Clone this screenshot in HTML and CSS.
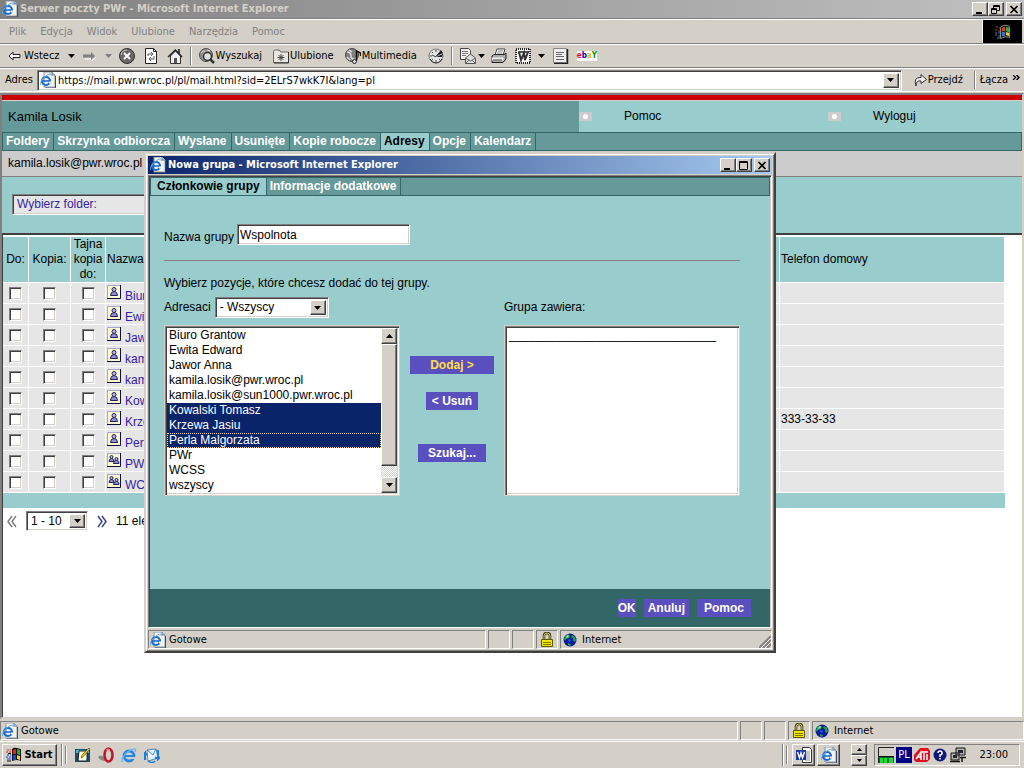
FILE: index.html
```html
<!DOCTYPE html>
<html lang="pl">
<head>
<meta charset="utf-8">
<title>Serwer poczty PWr</title>
<link rel="stylesheet" href="styles.css">
</head>
<body>
<svg class="sprites" aria-hidden="true">
  <symbol id="ie-page" viewBox="0 0 16 16">
    <path d="M4 0h8l3 3v12H4z" fill="#f4f4ec" stroke="#8c96a8"/><path d="M12 0v3h3" fill="#c8d0dc" stroke="#6878a0"/>
    <path d="M15.500 4v12H5" fill="none" stroke="#404878"/>
    <circle cx="6" cy="9" r="4" fill="none" stroke="#1c6cd0" stroke-width="2.200"/><path d="M3 9h7" stroke="#1c6cd0" stroke-width="1.600"/><path d="M9 10.500h3" stroke="#f4f4ec" stroke-width="2"/>
    <path d="M1 13c-2-1 1-6 5-9s6-2 5 0" fill="none" stroke="#58b0f0"/>
  </symbol>
  <symbol id="ie" viewBox="0 0 16 16">
    <circle cx="8" cy="9" r="5" fill="none" stroke="#2888e0" stroke-width="2.800"/><path d="M4 9h9" stroke="#2888e0" stroke-width="2"/><path d="M10 11h5" stroke="#d4d0c8" stroke-width="2"/>
    <path d="M2 15c-3-1 1-8 6-11s8-3 6 1" fill="none" stroke="#60b8f8" stroke-width="1.300"/>
  </symbol>
  <symbol id="flag" viewBox="0 0 16 16">
    <path d="M6 2q2-2 5-1t4 1v12q-2-1-4-1t-5 1z" fill="#111"/>
    <path d="M7 3q2-1 3-1v5H7z" fill="#e02810"/><path d="M11 2l3 1v5l-3-1z" fill="#20b030"/><path d="M7 8h3v5l-3 0z" fill="#1848e0"/><path d="M11 8l3 1v4l-3-1z" fill="#f8d010"/>
    <path d="M1 3h2M4 3h1M0 5h2M3 5h2" stroke="#e02810"/><path d="M1 8h2M4 8h1M0 10h2M3 10h2M1 12h4" stroke="#1848e0"/><path d="M2 6.500h3M1 14h4" stroke="#111"/>
  </symbol>
  <symbol id="lock" viewBox="0 0 14 16">
    <path d="M4 8V4q0-3 3-3t3 3v4" fill="none" stroke="#403c00" stroke-width="2.600"/><path d="M4 8V4q0-3 3-3t3 3v4" fill="none" stroke="#c8c080"/>
    <path d="M1.500 7.500h11v7h-11z" fill="#f0e800" stroke="#605800"/><path d="M3 10.500h8M3 12.500h8" stroke="#807800"/>
  </symbol>
  <symbol id="globe" viewBox="0 0 14 14">
    <circle cx="7" cy="7" r="6.500" fill="#0818a0"/><path d="M2 3l3-2 2 2-1 2-3 1-1 2-1-2zM9 2l3 2 1 4-2 1-1-2v-2l-2-1zM5 10l3 1-1 2-2-1z" fill="#18a838"/><path d="M3 4l2-2 1 1-2 2z" fill="#a8e8c8"/><path d="M6 6l2 1-1 2-2-1z" fill="#2858f0"/>
  </symbol>
  <symbol id="person" viewBox="0 0 14 14">
    <path d="M.5.5h13v13H.5z" fill="#fffbd0" stroke="#a8a8c8"/><path d="M13.500 0v13.500H0" fill="none" stroke="#101040"/>
    <circle cx="7" cy="4.500" r="2" fill="#b8b8e8" stroke="#202060"/><path d="M3.500 10.500q0-4 3.500-4t3.500 4z" fill="#9090d8" stroke="#202060"/>
  </symbol>
  <symbol id="people" viewBox="0 0 14 14">
    <path d="M.5.5h13v13H.5z" fill="#fffbd0" stroke="#a8a8c8"/><path d="M13.500 0v13.500H0" fill="none" stroke="#101040"/>
    <circle cx="4.500" cy="4" r="1.500" fill="#b8b8e8" stroke="#202060"/><path d="M2 8.500q0-3 2.500-3t2.500 3z" fill="#9090d8" stroke="#202060"/>
    <circle cx="9.500" cy="6" r="1.500" fill="#b8b8e8" stroke="#202060"/><path d="M6.500 10.500q0-3 3-3t2.500 3z" fill="#9090d8" stroke="#202060"/>
  </symbol>
  <symbol id="down" viewBox="0 0 7 4"><path d="M0 0h7L3.500 4z" fill="currentColor"/></symbol>
  <symbol id="up" viewBox="0 0 7 4"><path d="M0 4h7L3.500 0z" fill="currentColor"/></symbol>
  <symbol id="min" viewBox="0 0 10 9"><path d="M1 8h6" stroke="#000" stroke-width="2"/></symbol>
  <symbol id="max" viewBox="0 0 10 9"><path d="M.5.5h8v8h-8zM0 1.500h9" fill="none" stroke="#000"/></symbol>
  <symbol id="restore" viewBox="0 0 10 9"><path d="M2.500 3V.5h6v5H6M2 1.500h7M.5 3.500h5v5h-5zM0 4.500h6" fill="none" stroke="#000"/></symbol>
  <symbol id="close" viewBox="0 0 10 9"><path d="M1.500 1l7 7M8.500 1l-7 7" stroke="#000" stroke-width="1.700"/></symbol>
</svg>

<div class="desktop">
  <header class="titlebar titlebar-idle">
    <svg class="i16"><use href="#ie-page"/></svg>
    <h1 class="window-title">Serwer poczty PWr - Microsoft Internet Explorer</h1>
    <div class="window-buttons">
      <button class="wbtn" aria-label="Minimalizuj"><svg><use href="#min"/></svg></button>
      <button class="wbtn" aria-label="Przywróć"><svg><use href="#restore"/></svg></button>
      <button class="wbtn wbtn-close" aria-label="Zamknij"><svg><use href="#close"/></svg></button>
    </div>
  </header>

  <nav class="bar menubar">
    <button class="menu">Plik</button><button class="menu">Edycja</button><button class="menu">Widok</button><button class="menu">Ulubione</button><button class="menu">Narzędzia</button><button class="menu">Pomoc</button>
    <span class="throbber"><svg class="i16" viewBox="0 0 16 16"><path d="M5.500 3.500q4-4 9-1v11q-4-2-9 1z" fill="#222" stroke="#8a8a80"/><path d="M7 4q2-1 3-1v4H7z" fill="#e04020"/><path d="M11 3l3 1v4l-3-1z" fill="#30b040"/><path d="M7 8h3v4H7z" fill="#3070d8"/><path d="M11 8l3 1v3l-3-1z" fill="#f8d020"/><path d="M1 3h2M4 4h1M0 6h2M3 7h2" stroke="#b05040"/><path d="M0 9h2M3 9h2M0 11h2M3 12h2M2 14h3" stroke="#5878b0"/></svg></span>
  </nav>

  <div class="bar toolbar">
    <button class="tool"><svg class="arrow" viewBox="0 0 13 10"><path d="M1 5l4-4v2.500h7v3H5V9z" fill="#fff" stroke="#222"/></svg><span>Wstecz</span></button>
    <svg class="tri tri-back"><use href="#down"/></svg>
    <button class="tool tool-off" aria-label="Dalej"><svg class="arrow" viewBox="0 0 13 10"><path d="M13 6L9 10V8H2" fill="none" stroke="#fff"/><path d="M12 5L8 1v2.500H0v3h8V9z" fill="#808080"/></svg></button>
    <svg class="tri tri-off"><use href="#down"/></svg>
    <button class="tool" aria-label="Zatrzymaj"><svg class="i16" viewBox="0 0 16 16"><circle cx="8" cy="8" r="7.500" fill="#686868" stroke="#303030"/><path d="M2 7q1-5 6-5" fill="none" stroke="#c8c8c8"/><path d="M5 5l6 6M11 5l-6 6" stroke="#fff" stroke-width="1.800"/></svg></button>
    <button class="tool" aria-label="Odśwież"><svg class="i16" viewBox="0 0 16 16"><path d="M2.500.5h8l3 3v12h-11z" fill="#fff" stroke="#222"/><path d="M10.500.5v3h3" fill="none" stroke="#222"/><path d="M5 8V6h5M8 4l2 2-2 2M11 8v3H6M8 9l-2 2 2 2" fill="none" stroke="#555"/></svg></button>
    <button class="tool tool-home" aria-label="Strona główna"><svg class="i16" viewBox="0 0 16 16"><path d="M11 1h2v5h-2z" fill="#444"/><path d="M3.500 8v7.500h10V8L8.500 3z" fill="#eee" stroke="#333"/><path d="M1 9l7.500-7L15 9" fill="none" stroke="#222" stroke-width="1.500"/><path d="M7 10h3v5H7z" fill="#555"/></svg></button>
    <span class="sep"></span>
    <button class="tool"><svg class="i16" viewBox="0 0 16 16"><circle cx="7" cy="7" r="6.500" fill="#909090" stroke="#505050"/><path d="M2 5q3-4 5 0t-3 4M8 2l3 1" fill="none" stroke="#ddd"/><circle cx="8.500" cy="8.500" r="4" fill="#e0e0e0" stroke="#333" stroke-width="1.500"/><path d="M11 11l4 4" stroke="#333" stroke-width="2.500"/></svg><span>Wyszukaj</span></button>
    <button class="tool tool-gap"><svg class="i16" viewBox="0 0 16 16"><path d="M.5 14.500v-11l1-1.500h5l1 2h8v10.500z" fill="#e8e8e0" stroke="#666"/><path d="M15.500 4v11H1" fill="none" stroke="#333"/><path d="M8 6v7M4.500 9.500h7M5.500 7l5 5M10.500 7l-5 5" stroke="#444"/></svg><span>Ulubione</span></button>
    <button class="tool tool-gap"><svg class="i16" viewBox="0 0 16 16"><circle cx="7" cy="7" r="6.500" fill="#808080" stroke="#484848"/><path d="M2 4q4 0 4 4t5 3M4 2l3 2M2 9l3 3" fill="none" stroke="#ddd" stroke-width="1.500"/><path d="M11.500 13V3l4 2v3" fill="none" stroke="#111" stroke-width="1.400"/><circle cx="9.500" cy="13.500" r="2" fill="#e0e0e0" stroke="#222"/></svg><span>Multimedia</span></button>
    <button class="tool tool-gap" aria-label="Historia"><svg class="i16" viewBox="0 0 16 16"><circle cx="8" cy="8" r="7" fill="#e4e4e4" stroke="#777"/><path d="M14 11q-2 4-6 4t-6-4" fill="none" stroke="#333"/><path d="M7 9l6-7 2 3zM8 9l7-3-1 3z" fill="#222"/><path d="M8 2v2M2 8h2M8 12v2M4 4l1 1M4 12l1-1M11 11l1 1M4 7l4 2" stroke="#444"/></svg></button>
    <span class="sep"></span>
    <button class="tool" aria-label="Poczta"><svg class="i16" viewBox="0 0 16 16"><path d="M.5.5h8l2 2v9H.5z" fill="#f4f4f4" stroke="#444"/><path d="M2 3.500h6M2 5.500h6M2 7.500h4" stroke="#777"/><path d="M5.500 10l5-4 5 4v5.500h-10z" fill="#ddd" stroke="#555"/><path d="M5.500 10l5 3 5-3M6 15l3-3M15 15l-3-3" fill="none" stroke="#666"/></svg></button>
    <svg class="tri tri-mail"><use href="#down"/></svg>
    <button class="tool" aria-label="Drukuj"><svg class="i16" viewBox="0 0 16 16"><path d="M4 7l2-6h8l-2 6z" fill="#fff" stroke="#444"/><path d="M7 3h5M6 5h5" stroke="#888"/><path d="M1 8l2-1.500h10L15 5v6l-3 3.500H1z" fill="#aaa" stroke="#222"/><path d="M1 9.500h11.500v3H1z" fill="#eee"/><path d="M2 12h9" stroke="#444"/></svg></button>
    <button class="tool tool-word" aria-label="Edytuj"><svg class="i16" viewBox="0 0 16 16"><path d="M1 1h14v14H1z" fill="#fff" stroke="#222" stroke-width="2" stroke-dasharray="1 1"/><path d="M3 4h4M6 4h4M10 4h4" stroke="#222" stroke-width="1.500"/><path d="M4 4l2 8 3-7 1 7 3-8" fill="none" stroke="#333" stroke-width="2"/></svg></button>
    <svg class="tri tri-word"><use href="#down"/></svg>
    <button class="tool tool-note" aria-label="Dyskusja"><svg class="i16" viewBox="0 0 16 16"><path d="M.5.5h13v14H.5z" fill="#eee" stroke="#888"/><path d="M14.500 1v14.500H1" fill="none" stroke="#222" stroke-width="1.500"/><path d="M3 4.500h8M3 6.500h6M3 8.500h8M3 11.500h8" stroke="#666"/></svg></button>
    <button class="ebay" aria-label="eBay"><span class="e">e</span><span class="b">b</span><span class="a">a</span><span class="y">Y</span></button>
  </div>

  <div class="bar addressbar">
    <label for="url">Adres</label>
    <div class="combo combo-url sunken">
      <svg class="i16"><use href="#ie-page"/></svg>
      <input id="url" class="url" value="https://mail.pwr.wroc.pl/pl/mail.html?sid=2ELrS7wkK7I&amp;lang=pl">
      <button class="dropper raised" aria-label="Rozwiń"><svg class="tri"><use href="#down"/></svg></button>
    </div>
    <button class="tool go"><svg class="go-icon" viewBox="0 0 13 13"><path d="M2 12Q-1 3 7 3.500V.5l5.500 5L7 9.500V7Q2 6 2 12z" fill="#eee" stroke="#333"/></svg><span>Przejdź</span></button>
    <span class="sep"></span>
    <button class="tool links">Łącza</button>
    <svg class="chev" viewBox="0 0 8 5"><path d="M1 0l2.500 2.500L1 5M4.500 0L7 2.500 4.500 5" fill="none" stroke="#000" stroke-width="1.400"/></svg>
  </div>

  <main class="viewport">
    <div class="redline"></div>
    <div class="userbar">
      <div class="user">Kamila Losik</div>
      <a class="toplink" href="#pomoc"><span class="bullet"></span>Pomoc</a>
      <a class="toplink" href="#wyloguj"><span class="bullet"></span>Wyloguj</a>
    </div>
    <nav class="tabs">
      <a class="tab" href="#f">Foldery</a><a class="tab" href="#s">Skrzynka odbiorcza</a><a class="tab" href="#w">Wysłane</a><a class="tab" href="#u">Usunięte</a><a class="tab" href="#k">Kopie robocze</a><a class="tab tab-on" href="#a">Adresy</a><a class="tab" href="#o">Opcje</a><a class="tab" href="#kal">Kalendarz</a>
    </nav>
    <div class="account">kamila.losik@pwr.wroc.pl</div>
    <div class="folderbar">
      <div class="combo folder sunken"><select aria-label="Folder"><option>Wybierz folder:</option></select><span class="dropper raised"><svg class="tri"><use href="#down"/></svg></span></div>
    </div>
    <div class="listing">
      <table class="contacts">
        <colgroup><col class="c-to"><col class="c-cc"><col class="c-bcc"><col class="c-name"><col class="c-tel"></colgroup>
        <thead><tr><th>Do:</th><th>Kopia:</th><th>Tajna kopia do:</th><th class="left">Nazwa</th><th class="left">Telefon domowy</th></tr></thead>
        <tbody>
          <tr><td><input type="checkbox" aria-label="Do"></td><td><input type="checkbox" aria-label="Kopia"></td><td><input type="checkbox" aria-label="Tajna kopia"></td><td><a class="name" href="#1"><svg class="i14"><use href="#person"/></svg>Biuro Grantow</a></td><td></td></tr>
          <tr><td><input type="checkbox" aria-label="Do"></td><td><input type="checkbox" aria-label="Kopia"></td><td><input type="checkbox" aria-label="Tajna kopia"></td><td><a class="name" href="#2"><svg class="i14"><use href="#person"/></svg>Ewita Edward</a></td><td></td></tr>
          <tr><td><input type="checkbox" aria-label="Do"></td><td><input type="checkbox" aria-label="Kopia"></td><td><input type="checkbox" aria-label="Tajna kopia"></td><td><a class="name" href="#3"><svg class="i14"><use href="#person"/></svg>Jawor Anna</a></td><td></td></tr>
          <tr><td><input type="checkbox" aria-label="Do"></td><td><input type="checkbox" aria-label="Kopia"></td><td><input type="checkbox" aria-label="Tajna kopia"></td><td><a class="name" href="#4"><svg class="i14"><use href="#person"/></svg>kamila.losik@pwr.wroc.pl</a></td><td></td></tr>
          <tr><td><input type="checkbox" aria-label="Do"></td><td><input type="checkbox" aria-label="Kopia"></td><td><input type="checkbox" aria-label="Tajna kopia"></td><td><a class="name" href="#5"><svg class="i14"><use href="#person"/></svg>kamila.losik@sun1000.pwr.wroc.pl</a></td><td></td></tr>
          <tr><td><input type="checkbox" aria-label="Do"></td><td><input type="checkbox" aria-label="Kopia"></td><td><input type="checkbox" aria-label="Tajna kopia"></td><td><a class="name" href="#6"><svg class="i14"><use href="#person"/></svg>Kowalski Tomasz</a></td><td></td></tr>
          <tr><td><input type="checkbox" aria-label="Do"></td><td><input type="checkbox" aria-label="Kopia"></td><td><input type="checkbox" aria-label="Tajna kopia"></td><td><a class="name" href="#7"><svg class="i14"><use href="#person"/></svg>Krzewa Jasiu</a></td><td class="left">333-33-33</td></tr>
          <tr><td><input type="checkbox" aria-label="Do"></td><td><input type="checkbox" aria-label="Kopia"></td><td><input type="checkbox" aria-label="Tajna kopia"></td><td><a class="name" href="#8"><svg class="i14"><use href="#person"/></svg>Perla Malgorzata</a></td><td></td></tr>
          <tr><td><input type="checkbox" aria-label="Do"></td><td><input type="checkbox" aria-label="Kopia"></td><td><input type="checkbox" aria-label="Tajna kopia"></td><td><a class="name" href="#9"><svg class="i14"><use href="#people"/></svg>PWr</a></td><td></td></tr>
          <tr><td><input type="checkbox" aria-label="Do"></td><td><input type="checkbox" aria-label="Kopia"></td><td><input type="checkbox" aria-label="Tajna kopia"></td><td><a class="name" href="#10"><svg class="i14"><use href="#people"/></svg>WCSS</a></td><td></td></tr>
        </tbody>
      </table>
      <div class="table-end"></div>
      <div class="pager">
        <svg class="page-arrow" viewBox="0 0 10 13"><path d="M5 1L1 6.500 5 12M9 1L5 6.500 9 12" fill="none" stroke="#808080" stroke-width="1.500"/></svg>
        <div class="combo pages sunken"><select aria-label="Strona"><option>1 - 10</option></select><span class="dropper raised"><svg class="tri"><use href="#down"/></svg></span></div>
        <svg class="page-arrow" viewBox="0 0 10 13"><path d="M1 1l4 5.500L1 12M5 1l4 5.500L5 12" fill="none" stroke="#404090" stroke-width="1.500"/></svg>
        <span class="count">11 elementów</span>
      </div>
    </div>
  </main>

  <footer class="statusbar">
    <div class="panel panel-main"><svg class="i16"><use href="#ie-page"/></svg>Gotowe</div>
    <div class="panel"></div><div class="panel"></div>
    <div class="panel panel-lock"><svg class="lock"><use href="#lock"/></svg></div>
    <div class="panel panel-zone"><svg class="i14"><use href="#globe"/></svg>Internet</div>
  </footer>

  <div class="taskbar">
    <button class="start raised"><svg class="i16"><use href="#flag"/></svg>Start</button>
    <span class="sep sep-task"></span><span class="sep sep-grip"></span>
    <div class="quick">
      <svg class="i16" viewBox="0 0 16 16"><path d="M0 2h15v13H0z" fill="#105070"/><path d="M1 3h13v3H1z" fill="#50b0d8"/><path d="M4 4h8v10H3z" fill="#fffce0" stroke="#222"/><path d="M6 11l1-3 7-7 1 1-7 8z" fill="#f0c020" stroke="#604000" stroke-width=".6"/></svg>
      <svg class="i16" viewBox="0 0 16 16"><path d="M0 10q2-3 6 0l2 4q-6 0-8-4z" fill="#888"/><ellipse cx="10.500" cy="8" rx="4" ry="6.500" fill="none" stroke="#c01828" stroke-width="2.600"/><path d="M8 3q2-2 4 0" fill="none" stroke="#f09090"/></svg>
      <svg class="i16"><use href="#ie"/></svg>
      <svg class="i16" viewBox="0 0 16 16"><path d="M3 3l9-1 2 9-10 3z" fill="#e8f4ff" stroke="#4888c8"/><path d="M3 3l6 5 3-6" fill="none" stroke="#4888c8"/><path d="M1 13V6l-1 1M1 6l2 2M14 3v9l2-2M14 12l-3-2" fill="none" stroke="#2078d8" stroke-width="2"/><path d="M4 14q4 3 7 0" fill="none" stroke="#2078d8" stroke-width="1.500"/></svg>
    </div>
    <div class="task-right">
      <span class="sep sep-task"></span><span class="sep sep-grip"></span>
      <button class="task raised" aria-label="Word"><svg class="i16" viewBox="0 0 16 16"><path d="M6.500.5h7l2 2v13h-9z" fill="#fff" stroke="#333"/><path d="M9 5h5M9 7h5M9 9h5M9 11h5M9 13h5" stroke="#888"/><path d="M0 3h10v10H0z" fill="#1838a0"/><path d="M1.500 5l2 6 1.500-5 1.500 5 2-6" fill="none" stroke="#fff" stroke-width="1.400"/></svg></button>
      <button class="task raised" aria-label="Internet Explorer"><svg class="i16"><use href="#ie-page"/></svg></button>
      <div class="spinner"><button class="raised" aria-label="W górę"><svg><use href="#up"/></svg></button><button class="raised" aria-label="W dół"><svg><use href="#down"/></svg></button></div>
      <div class="tray">
        <svg class="i16" viewBox="0 0 16 16"><path d="M0 0h16v16H0z" fill="#d4d0c8"/><path d="M.5 16V.5H16" fill="none" stroke="#222"/><path d="M1 9.500h15" stroke="#111"/><path d="M1 10h15v6H1z" fill="#063"/><path d="M2 11h3v5H2zM6 11h3v5H6zM11 11h4v5h-4z" fill="#18e030"/></svg>
        <span class="lang">PL</span>
        <svg class="i16" viewBox="0 0 16 16"><path d="M0 13V8l6-7h8l2 3v8l-3 3H2z" fill="#e01020"/><path d="M2 12l5-7v8M4 10h3M8 5h6M10 6v7M13 7v6" fill="none" stroke="#fff" stroke-width="1.500"/></svg>
        <svg class="i16" viewBox="0 0 16 16"><circle cx="8" cy="8" r="6.500" fill="#101878"/><path d="M6 6q0-2 2-2t2 2-2 2v2M8 11v1.500" fill="none" stroke="#fff" stroke-width="1.500"/></svg>
        <svg class="i16" viewBox="0 0 16 16"><path d="M6 1h9v7H6zM1 6h8v7H1z" fill="#b8b4ac" stroke="#111"/><path d="M8 3h5v3H8zM3 8h4v3H3z" fill="#223"/><path d="M0 14.500h10M10 10.500h6M12 10v5" stroke="#111" stroke-width="1.500"/></svg>
        <time class="clock">23:00</time>
      </div>
    </div>
  </div>

  <section class="dialog" aria-labelledby="dialog-title">
    <header class="titlebar">
      <svg class="i16"><use href="#ie-page"/></svg>
      <h2 class="window-title" id="dialog-title">Nowa grupa - Microsoft Internet Explorer</h2>
      <div class="window-buttons">
        <button class="wbtn" aria-label="Minimalizuj"><svg><use href="#min"/></svg></button>
        <button class="wbtn" aria-label="Maksymalizuj"><svg><use href="#max"/></svg></button>
        <button class="wbtn wbtn-close" aria-label="Zamknij"><svg><use href="#close"/></svg></button>
      </div>
    </header>
    <div class="dialog-view">
      <nav class="tabs dialog-tabs"><a class="tab tab-on" href="#czl">Członkowie grupy</a><a class="tab" href="#inf">Informacje dodatkowe</a></nav>
      <form class="group-form">
        <div class="name-row"><label for="group">Nazwa grupy</label><input id="group" class="group-name sunken" value="Wspolnota"></div>
        <hr class="rule">
        <p class="hint">Wybierz pozycje, które chcesz dodać do tej grupy.</p>
        <div class="lists">
          <div class="source"><label for="src">Adresaci</label><div class="combo source-combo sunken"><select id="src"><option>- Wszyscy</option></select><span class="dropper raised"><svg class="tri"><use href="#down"/></svg></span></div></div>
          <label class="contains" for="members">Grupa zawiera:</label>
          <div class="listbox list-left">
            <select multiple size="11" aria-label="Adresaci">
              <option>Biuro Grantow</option><option>Ewita Edward</option><option>Jawor Anna</option><option>kamila.losik@pwr.wroc.pl</option><option>kamila.losik@sun1000.pwr.wroc.pl</option><option selected>Kowalski Tomasz</option><option selected>Krzewa Jasiu</option><option selected class="focus">Perla Malgorzata</option><option>PWr</option><option>WCSS</option><option>wszyscy</option>
            </select>
            <div class="scroll"><span class="scroll-btn raised"><svg class="tri"><use href="#up"/></svg></span><span class="thumb raised"></span><span class="scroll-btn raised"><svg class="tri"><use href="#down"/></svg></span></div>
          </div>
          <div class="moves">
            <button type="button" class="btn btn-add">Dodaj &gt;</button>
            <button type="button" class="btn btn-remove">&lt; Usuń</button>
            <button type="button" class="btn btn-find">Szukaj...</button>
          </div>
          <div class="listbox"><select id="members" multiple size="11"><option>_______________________________</option></select></div>
        </div>
      </form>
      <div class="actions"><button class="btn btn-ok">OK</button><button class="btn btn-cancel">Anuluj</button><button class="btn btn-help">Pomoc</button></div>
    </div>
    <footer class="statusbar">
      <div class="panel panel-main"><svg class="i16"><use href="#ie-page"/></svg>Gotowe</div>
      <div class="panel"></div><div class="panel"></div>
      <div class="panel panel-lock"><svg class="lock"><use href="#lock"/></svg></div>
      <div class="panel panel-zone"><svg class="i14"><use href="#globe"/></svg>Internet<svg class="grip" viewBox="0 0 12 12"><path d="M0 12L12 0M4 12l8-8M8 12l4-4" stroke="#808080" stroke-width="2"/><path d="M2 12L12 2M6 12l6-6" stroke="#fff"/></svg></div>
    </footer>
  </section>
</div>
</body>
</html>
```
FILE: styles.css
```css
* { box-sizing: border-box; }
:root {
  --face: #d4d0c8;
  --shade: #808080;
  --dark: #404040;
  --teal: #99cccc;
  --teal-mid: #669999;
  --teal-dark: #336666;
  --link: #3322aa;
  --ui: "DejaVu Sans Condensed", "DejaVu Sans", sans-serif;
  --page: "Liberation Sans", Arial, sans-serif;
}
body { margin: 0; font: 11px/14px var(--ui); color: #000; background: var(--face); }
button { margin: 0; padding: 0; border: 0; background: none; font: inherit; color: inherit; }
a { color: inherit; text-decoration: none; }
.sprites { position: absolute; width: 0; height: 0; }
.i16 { width: 16px; height: 16px; flex: none; }
.i14 { width: 14px; height: 14px; flex: none; }
.tri { width: 7px; height: 4px; flex: none; }
.raised {
  background: var(--face);
  border: 1px solid;
  border-color: #fff var(--dark) var(--dark) #fff;
  box-shadow: inset -1px -1px var(--shade);
}
.sunken {
  border: 1px solid;
  border-color: var(--shade) #fff #fff var(--shade);
  box-shadow: inset 1px 1px var(--dark), inset -1px -1px var(--face);
}
.sep { width: 2px; height: 18px; flex: none; border-left: 1px solid var(--shade); border-right: 1px solid #fff; }

.desktop { position: relative; display: flex; flex-direction: column; height: 100vh; overflow: hidden; background: var(--face); }

.titlebar { display: flex; align-items: center; flex: none; gap: 2px; height: 18px; padding-left: 2px; color: #fff; background: linear-gradient(90deg, #0a246a, #a6caf0); }
.titlebar-idle { color: var(--face); background: linear-gradient(90deg, #808080, #c0c0c0); }
.window-title { margin: 0; font: bold 11px/16px var(--ui); white-space: nowrap; }
.window-buttons { display: flex; margin-left: auto; padding-right: 2px; }
.wbtn { display: grid; place-items: center; width: 16px; height: 14px; background: var(--face); border: 1px solid; border-color: #fff var(--dark) var(--dark) #fff; box-shadow: inset -1px -1px var(--shade); }
.wbtn svg { width: 10px; height: 9px; }
.wbtn-close { margin-left: 2px; }

.bar { display: flex; align-items: center; flex: none; height: 24px; border-top: 1px solid #fff; border-bottom: 1px solid var(--shade); }
.menubar { margin-top: 1px; box-shadow: 0 -1px var(--shade); padding-left: 9px; gap: 14px; color: var(--shade); height: 25px; }
.throbber { display: grid; place-items: center; align-self: stretch; width: 40px; margin: 0 2px 0 auto; background: #000; border-left: 1px solid #fff; }
.toolbar { padding-left: 8px; }
.tool { display: flex; align-items: center; gap: 1px; }
.arrow { width: 13px; height: 10px; margin-right: 2px; }
.tri-back { margin: 0 8px; }
.tri-off { margin: 0 7px; color: var(--shade); }
.toolbar .tool + .tool { margin-left: 8px; }
.toolbar .tool + .tool-gap { margin-left: 11px; }
.toolbar .sep { margin: 0 7px; }
.tri-mail { margin: 0 6px 0 2px; }
.tri-word { margin: 0 8px 0 7px; }
.ebay { margin-left: 8px; font: bold 8px/10px var(--ui); background: #fff; }
.e { color: #e00; } .b { color: #00c; } .a { color: #e8b800; } .y { color: #090; }

.addressbar { padding: 0 2px 0 5px; gap: 4px; border-bottom-color: #fff; }
.combo { display: flex; align-items: center; background: #fff; padding: 2px; }
.combo select, .url { flex: 1; min-width: 0; height: 16px; margin: 0; padding: 0 2px; border: 0; outline: 0; background: none; appearance: none; color: inherit; font: inherit; }
.combo-url { flex: 1; height: 21px; }
.dropper { display: grid; place-items: center; flex: none; width: 16px; align-self: stretch; }
.go { width: 64px; padding-left: 8px; }
.go-icon { width: 13px; height: 13px; }
.chev { width: 8px; height: 5px; margin: 0 2px 6px 0; }

.viewport { flex: 1; min-height: 0; display: flex; flex-direction: column; margin-top: 1px; border: 2px solid; border-color: var(--shade) var(--face) var(--face) var(--shade); box-shadow: inset 1px 1px var(--dark); background: #fff; font: 12px/15px var(--page); }
.redline { flex: none; height: 6px; background: #c00; border-bottom: 1px solid var(--face); }
.userbar { display: grid; grid-template-columns: 577fr 249fr 194fr; flex: none; height: 31px; background: var(--teal); }
.user { display: flex; align-items: center; padding-left: 6px; background: var(--teal-mid); font-size: 13px; }
.toplink { display: flex; align-items: center; gap: 32px; font-size: 12px; }
.bullet { display: grid; place-items: center; width: 13px; height: 9px; background: #ccc; }
.bullet::before { content: ""; width: 5px; height: 5px; border-radius: 50%; background: #fff; }
.tabs { display: flex; flex: none; height: 19px; border: 1px solid var(--teal-dark); background: var(--teal-mid); color: #fff; font: bold 12px/17px var(--page); }
.tab { padding: 0 4px 0 3px; border-right: 1px solid var(--teal-dark); white-space: nowrap; }
.tab-on { color: #000; background: var(--teal); }
.account { flex: none; height: 26px; padding: 5px 6px 0; background: #ccc; border-bottom: 1px solid var(--shade); }
.folderbar { flex: none; height: 58px; padding: 17px 10px 0; background: var(--teal); border-bottom: 2px solid var(--dark); }
.folder { width: 220px; height: 21px; background: #e6e6e6; color: var(--link); }
.listing { flex: 1; padding: 1px 17px 0 0; }
.contacts { width: 100%; table-layout: fixed; border-spacing: 1px; }
.c-to { width: 25px; } .c-cc { width: 41px; } .c-bcc { width: 34px; } .c-name { width: 673px; }
.contacts th { height: 45px; padding: 0; font-weight: normal; background: var(--teal); }
.contacts td { height: 20px; padding: 0; text-align: center; background: #e6e6e6; line-height: 13px; }
.contacts .left { text-align: left; padding-left: 1px; }
.contacts input { appearance: none; display: block; width: 13px; height: 13px; margin: 0 auto; background: #fff; border: 1px solid; border-color: var(--shade) #fff #fff var(--shade); box-shadow: inset 1px 1px var(--dark), inset -1px -1px var(--face); }
.name { display: flex; align-items: flex-end; gap: 4px; height: 20px; padding-left: 1px; color: var(--link); white-space: nowrap; }
.name svg { align-self: flex-start; margin-top: 2px; }
.table-end { height: 15px; margin-left: 1px; background: var(--teal); }
.pager { display: flex; align-items: center; gap: 9px; padding: 3px 5px; }
.page-arrow { width: 10px; height: 13px; }
.pages { width: 62px; height: 20px; }

.statusbar { display: flex; align-items: stretch; gap: 2px; flex: none; height: 19px; margin-top: 2px; }
.panel { display: flex; align-items: center; gap: 3px; width: 22px; padding-left: 1px; border: 1px solid; border-color: var(--shade) #fff #fff var(--shade); }
.panel-main { flex: 1; }
.panel-lock { justify-content: center; padding: 0; }
.panel-zone { width: 212px; gap: 5px; padding-left: 2px; }
.lock { width: 14px; height: 16px; }
.grip { width: 12px; height: 12px; margin-left: auto; align-self: flex-end; }

.taskbar { display: flex; align-items: center; flex: none; height: 27px; padding: 0 4px 0 2px; border-top: 1px solid #fff; margin-top: 1px; }
.start { display: flex; align-items: center; justify-content: center; gap: 2px; width: 55px; height: 22px; font: bold 11px/14px var(--ui); }
.sep-task { height: 22px; margin: 0 2px 0 4px; }
.sep-grip { height: 18px; }
.quick { display: flex; gap: 7px; padding-left: 8px; }
.task-right { display: flex; align-items: center; margin-left: auto; }
.task { display: grid; place-items: center; width: 23px; height: 22px; margin-right: 2px; }
.sep-grip + .task { margin-left: 4px; }
.spinner { display: grid; margin: 0 7px 0 9px; }
.spinner button { display: grid; place-items: center; width: 16px; height: 11px; }
.spinner svg { width: 5px; height: 3px; }
.tray { display: flex; align-items: center; gap: 2px; width: 146px; height: 22px; padding: 0 11px 0 3px; border: 1px solid; border-color: var(--shade) #fff #fff var(--shade); }
.lang { width: 16px; height: 16px; line-height: 16px; text-align: center; color: #fff; background: #000080; }
.clock { margin-left: auto; }

.dialog { position: absolute; left: 144px; top: 152px; display: flex; flex-direction: column; width: 632px; height: 501px; padding: 2px; background: var(--face); border: 2px solid; border-color: var(--face) var(--dark) var(--dark) var(--face); box-shadow: inset 1px 1px #fff, inset -1px -1px var(--shade); }
.dialog-view { display: flex; flex-direction: column; flex: 1; margin-top: 1px; padding: 1px 0 0 1px; border: 1px solid; border-color: var(--shade) #fff #fff var(--shade); box-shadow: inset 1px 1px var(--dark), inset -1px -1px var(--face); background: var(--teal); font: 12px/15px var(--page); }
.dialog-view > * { margin-right: 1px; }
.dialog-tabs .tab-on { padding: 0 6px; }
.group-form { flex: 1; padding: 28px 30px 0 14px; }
.name-row { display: flex; align-items: flex-end; gap: 3px; }
.group-name { width: 173px; height: 21px; padding: 1px 2px; margin: 0; background: #fff; font: inherit; outline: 0; }
.rule { height: 1px; margin: 15px 0; border: 0; background: #888080; }
.hint { margin: 0 0 6px; }
.lists { display: grid; grid-template-columns: 236px 104px 236px; row-gap: 7px; }
.source { display: flex; align-items: center; gap: 4px; grid-column: 1 / 3; }
.source-combo { width: 114px; height: 21px; }
.contains { align-self: center; }
.listbox { display: flex; height: 171px; border: 1px solid var(--face); padding: 2px; background: #fff; box-shadow: inset 1px 1px var(--shade), inset 2px 2px var(--dark), inset -1px -1px #fff, inset -2px -2px var(--face); }
.listbox select { flex: 1; min-width: 0; margin: 0; padding: 0; border: 0; outline: 0; border-radius: 0; overflow: hidden; background: none; font: inherit; color: #000; }
.listbox option { height: 15px; min-height: 0; padding: 0 2px; line-height: 15px; }
.listbox option:checked { color: #fff; -webkit-text-fill-color: #fff; background: #0a246a linear-gradient(#0a246a, #0a246a); }
.focus { outline: 1px dotted #f5db95; outline-offset: -1px; }
.scroll { display: flex; flex-direction: column; width: 16px; background: repeating-conic-gradient(#fff 0 25%, #d4d0c8 0 50%) 0 0 / 2px 2px; }
.scroll-btn { display: grid; place-items: center; height: 16px; flex: none; }
.thumb { height: 122px; margin-bottom: auto; }
.moves { display: flex; flex-direction: column; align-items: center; padding-top: 31px; gap: 18px; }
.btn { height: 18px; background: #5a4fbf; color: #fff; font: bold 12px/18px var(--page); }
.btn-add { padding: 0 20px; color: #ffdf40; }
.btn-remove { padding: 0 6px; }
.btn-find { margin-top: 16px; padding: 0 10px; }
.actions { display: flex; align-items: center; justify-content: flex-end; gap: 8px; height: 38px; padding-right: 19px; background: var(--teal-dark); }
.btn-cancel { padding: 0 4px; }
.btn-help { padding: 0 7px; }
```
